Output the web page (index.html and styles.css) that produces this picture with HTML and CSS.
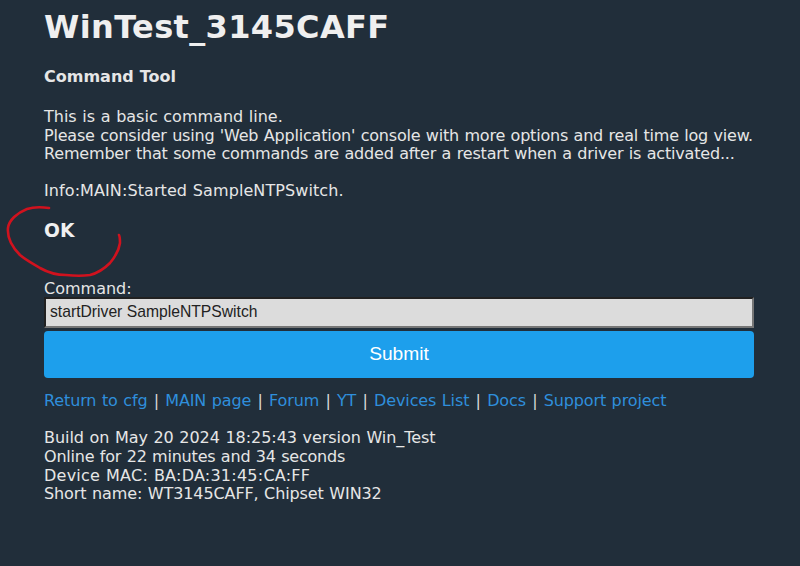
FILE: index.html
```html
<!DOCTYPE html>
<html lang="en">
<head>
<meta charset="utf-8">
<title>WinTest_3145CAFF</title>
<link rel="stylesheet" href="styles.css">
</head>
<body>
<main class="page">
  <h1 class="title">WinTest_3145CAFF</h1>
  <h3 class="tool">Command Tool</h3>
  <p class="intro"><span class="line">This is a basic command line.</span><span class="line l2">Please consider using 'Web Application' console with more options and real time log view.</span><span class="line l3">Remember that some commands are added after a restart when a driver is activated...</span></p>
  <p class="log">Info:MAIN:Started SampleNTPSwitch.</p>
  <h3 class="ok">OK</h3>
  <form class="form">
    <label class="label" for="cmd">Command:</label>
    <input class="input" id="cmd" type="text" value="startDriver SampleNTPSwitch">
    <button class="submit" type="button">Submit</button>
  </form>
  <nav class="links"><a href="#">Return to cfg</a> <span class="sep">|</span> <a href="#">MAIN page</a> <span class="sep">|</span> <a href="#">Forum</a> <span class="sep">|</span> <a href="#">YT</a> <span class="sep">|</span> <a href="#">Devices List</a> <span class="sep">|</span> <a href="#">Docs</a> <span class="sep">|</span> <a href="#">Support project</a></nav>
  <p class="status"><span class="line s1">Build on May 20 2024 18:25:43 version Win_Test</span><span class="line s2">Online for 22 minutes and 34 seconds</span><span class="line s3">Device MAC: BA:DA:31:45:CA:FF</span><span class="line s4">Short name: WT3145CAFF, Chipset WIN32</span></p>
</main>
<svg class="scribble" viewBox="0 0 800 566" aria-hidden="true"><path d="M49 208C42 207 33 207 27 209C17 213 9 220 8 228C7 238 13 248 20 255C27 261 34 264 40 268C47 272 56 275 66 275C75 276 83 276 90 275C98 273 105 268 110 263C115 257 119 250 120 243C120 240 120 237 119 235"/></svg>
</body>
</html>
```
FILE: styles.css
```css
html, body {
  margin: 0;
  height: 100%;
  background: #212e3a;
}
body {
  position: relative;
  overflow: hidden;
  color: #e6e6e6;
  font-family: "DejaVu Sans", Verdana, sans-serif;
  font-size: 16px;
  line-height: 18.6px;
  word-spacing: 0.54px;
}
.page {
  width: 710px;
  margin-left: 44px;
  padding-top: 8px;
}
.title {
  margin: 0 0 21px;
  font-size: 32px;
  line-height: 38px;
  font-weight: 700;
  color: #efefef;
  letter-spacing: 0.36px;
}
.tool {
  margin: 0 0 22px;
  font-size: 16px;
  line-height: 19px;
  font-weight: 700;
}
.intro { margin: 0 0 18px; }
.line { display: block; white-space: nowrap; }
.l2 { letter-spacing: -0.195px; }
.l3 { letter-spacing: -0.175px; }
.log { margin: 0 0 20px; letter-spacing: 0.09px; }
.ok {
  margin: 0 0 38px;
  font-size: 18.7px;
  line-height: 22px;
  font-weight: 700;
  color: #f0f0f0;
}
.form { display: flex; flex-direction: column; }
.label { line-height: 17px; }
.input {
  box-sizing: border-box;
  width: 100%;
  height: 31px;
  margin: 0;
  padding: 0 4px 2px;
  border: 2px inset #767676;
  border-radius: 0;
  background: #dcdcdc;
  color: #222;
  font-family: "Liberation Sans", Arial, sans-serif;
  font-size: 15.7px;
}
.submit {
  height: 47px;
  margin-top: 3px;
  padding: 0 0 2px;
  border: 0;
  border-radius: 4px;
  background: #1d9fec;
  color: #fff;
  font-family: "Liberation Sans", Arial, sans-serif;
  font-size: 19.2px;
}
.links {
  margin-top: 13px;
  line-height: 19px;
  color: #d8d8d8;
  letter-spacing: -0.12px;
}
.links a { color: #2f8fdc; text-decoration: none; }
.sep { padding: 0 0.75px; }
.status { margin: 19px 0 0; }
.s1 { letter-spacing: -0.045px; }
.s2 { letter-spacing: -0.2px; }
.s3 { letter-spacing: 0.24px; }
.s4 { letter-spacing: -0.1px; }
.scribble {
  position: absolute;
  left: 0;
  top: 0;
  width: 800px;
  height: 566px;
  fill: none;
  stroke: #d0121e;
  stroke-width: 2.6;
  stroke-linecap: round;
  pointer-events: none;
}
```
